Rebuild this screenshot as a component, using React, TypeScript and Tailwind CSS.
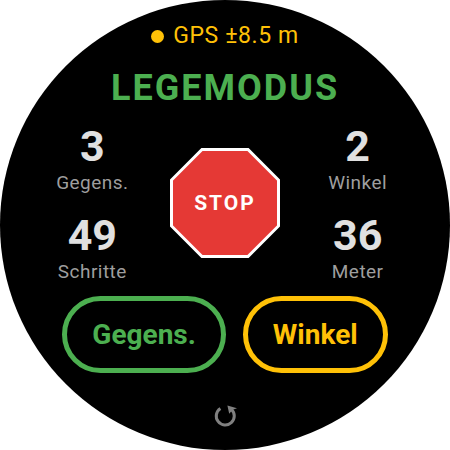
type StatProps = {
    value: number;
    label: string;
};

const Stat = ({ value, label }: StatProps) => (
    <div className="flex flex-col items-center">
        <dd className="text-[43px] leading-[44px] font-bold text-[#e0e0e0]">
            {value}
        </dd>
        <dt className="order-last text-[19px] leading-[30px] tracking-wide text-[#9e9e9e]">
            {label}
        </dt>
    </div>
);

const StopSign = () => (
    <button type="button" className="relative flex items-center justify-center">
        <svg viewBox="0 0 110 110" className="size-[110px]" aria-hidden="true">
            <polygon
                points="32,1.5 78,1.5 108.5,32 108.5,78 78,108.5 32,108.5 1.5,78 1.5,32"
                fill="#e53935"
                stroke="#ffffff"
                strokeWidth="3"
            />
        </svg>
        <span className="absolute text-[21px] leading-6 font-bold tracking-[2px] text-white">
            STOP
        </span>
    </button>
);

const ResetIcon = () => (
    <svg viewBox="0 0 24 24" className="size-6" aria-hidden="true">
        <path
            d="M7.4 4.4A9 9 0 1 0 18.4 5.4"
            fill="none"
            stroke="#808080"
            strokeWidth="3"
        />
        <path d="M14.4 1.4L24 4.2L19.8 5.8L16.2 9.8Z" fill="#808080" />
    </svg>
);

const App = () => {
    return (
        <main className="flex aspect-square w-full flex-col items-center rounded-full bg-black pt-[21px] font-[Roboto,sans-serif]">
            <div className="flex items-center gap-[9px] text-[23px] leading-[30px] tracking-wide text-[#ffc107]">
                <span className="size-[13px] rounded-full bg-[#ffc107]" />
                GPS ±8.5 m
            </div>
            <h1 className="mt-4 text-[36px] leading-[42px] font-bold tracking-[2px] text-[#4caf50]">
                LEGEMODUS
            </h1>

            <div className="mt-[15px] grid w-full grid-cols-3 px-[26px]">
                <dl className="flex flex-col gap-[15px]">
                    <Stat value={3} label="Gegens." />
                    <Stat value={49} label="Schritte" />
                </dl>
                <div className="flex items-start justify-center pt-6">
                    <StopSign />
                </div>
                <dl className="flex flex-col gap-[15px]">
                    <Stat value={2} label="Winkel" />
                    <Stat value={36} label="Meter" />
                </dl>
            </div>

            <div className="mt-[9px] flex gap-[17px] text-[28px] leading-[33px] font-bold">
                <button
                    type="button"
                    className="rounded-full border-5 border-[#4caf50] px-[25px] py-[17px] text-[#4caf50]"
                >
                    Gegens.
                </button>
                <button
                    type="button"
                    className="rounded-full border-5 border-[#ffc107] px-[25px] py-[17px] text-[#ffc107]"
                >
                    Winkel
                </button>
            </div>

            <button type="button" aria-label="Zurücksetzen" className="mt-[31px]">
                <ResetIcon />
            </button>
        </main>
    );
};

export default App;
